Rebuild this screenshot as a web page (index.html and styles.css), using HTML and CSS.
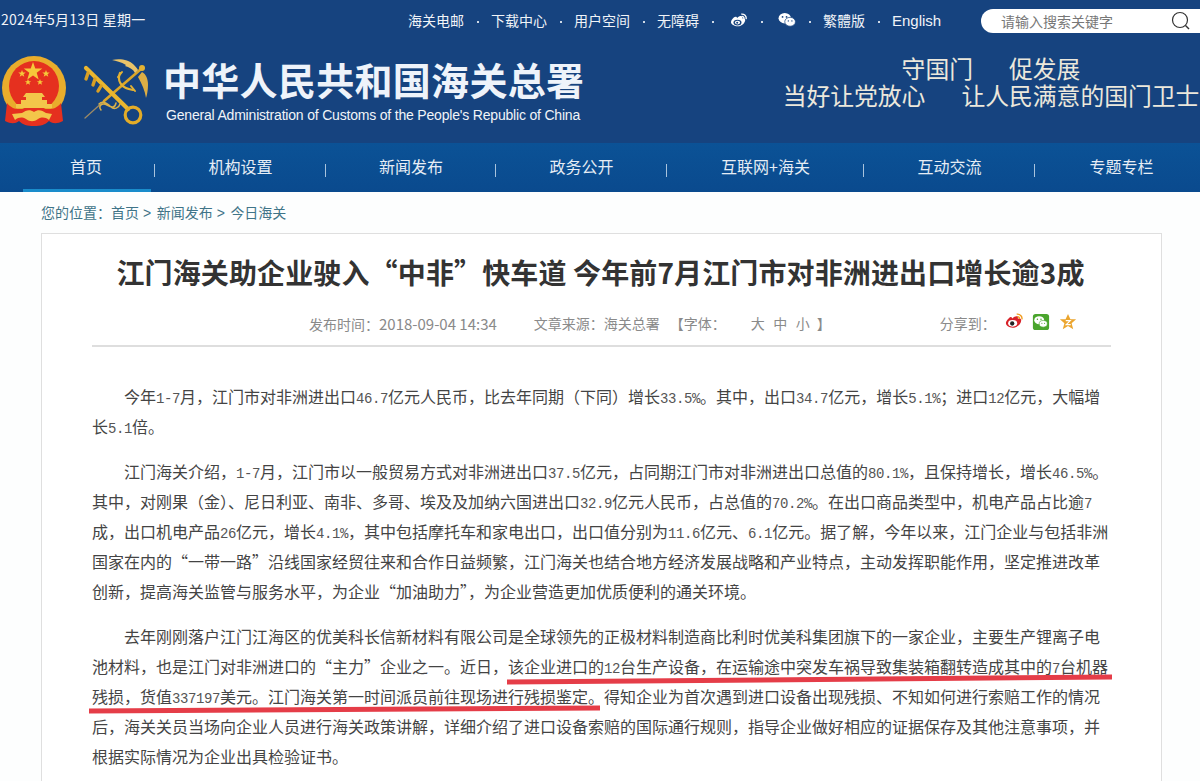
FILE: index.html
```html
<!DOCTYPE html>
<html lang="zh-CN">
<head>
    <meta charset="UTF-8">
    <title>江门海关助企业驶入“中非”快车道</title>
    <link rel="stylesheet" href="styles.css">
</head>
<body>

    <!-- 页头 -->
    <div class="header">
        <div class="top-bar">
            <div class="date">2024年5月13日 星期一</div>
            <div class="top-links">
                <a>海关电邮</a><i class="dot"></i>
                <a>下载中心</a><i class="dot"></i>
                <a>用户空间</a><i class="dot"></i>
                <a>无障碍</a><i class="dot"></i>
                <svg class="top-icon" viewBox="0 0 20 18">
                    <path fill="#fff" d="M8 5.500c2-2 4.300-2.600 5.300-1.600.5.500.5 1.400.2 2.300 2-.6 3.500-.1 3.500 1.700 0 3-3.700 7.100-8.500 7.100C4.900 15 1 13.100 1 10.500c0-1.400 1-3.500 2.800-5.100C5.400 4 7 3.300 8 5.500z"/>
                    <ellipse cx="8.300" cy="10.800" rx="4.500" ry="3.200" fill="#16437f"/>
                    <ellipse cx="8.300" cy="10.800" rx="3" ry="2" fill="#fff"/>
                    <circle cx="8" cy="11" r="1.200" fill="#16437f"/>
                    <path fill="none" stroke="#fff" stroke-width="1.500" d="M12.500 1.300c3.300-.5 6.200 2.200 5.600 5.600M13 4c1.600-.2 2.800 1 2.600 2.500"/>
                </svg><i class="dot"></i>
                <svg class="top-icon icon-wechat" viewBox="0 0 20 18">
                    <ellipse cx="7.500" cy="7" rx="7" ry="5.800" fill="#fff"/>
                    <ellipse cx="13.500" cy="11" rx="6" ry="5" fill="#fff" stroke="#16437f" stroke-width=".8"/>
                    <circle cx="5" cy="5.500" r="1" fill="#16437f"/>
                    <circle cx="9.500" cy="5.500" r="1" fill="#16437f"/>
                    <circle cx="11.500" cy="10" r=".8" fill="#16437f"/>
                    <circle cx="15.500" cy="10" r=".8" fill="#16437f"/>
                </svg><i class="dot"></i>
                <a>繁體版</a><i class="dot"></i>
                <a class="english">English</a>
            </div>
            <div class="search">
                <span class="search-text">请输入搜索关键字</span>
                <svg class="search-icon" viewBox="0 0 20 20">
                    <circle cx="9" cy="9" r="7.500" fill="none" stroke="#333" stroke-width="1.200"/>
                    <path d="M14.500 14.500l3.500 3.500" stroke="#333" stroke-width="1.400"/>
                </svg>
            </div>
        </div>
        <div class="brand">
            <svg class="emblem" viewBox="0 0 66 70">
                <circle cx="32" cy="32" r="32" fill="#e9ad2c"/>
                <circle cx="32" cy="30" r="25" fill="#e5301f"/>
                <path fill="#f6c93a" d="M31 6l2.300 6.600h7l-5.600 4.200 2 6.700-5.700-4-5.700 4 2-6.700-5.600-4.200h7z"/>
                <path fill="#f6c93a" d="M20 14l1 2.600h2.700l-2.200 1.600.8 2.600-2.300-1.600-2.300 1.600.8-2.600-2.200-1.600H19zM44 14l1 2.600h2.700l-2.200 1.600.8 2.600-2.300-1.600-2.300 1.600.8-2.600-2.200-1.600H43zM26 23l.9 2.200h2.300l-1.900 1.400.7 2.200-2-1.300-2 1.300.7-2.200-1.900-1.400h2.300zM38 23l.9 2.200h2.300l-1.900 1.400.7 2.200-2-1.300-2 1.300.7-2.200-1.900-1.400h2.300z"/>
                <path fill="#f3c64a" d="M24 37h16l3 4h-3v3h5v4H19v-4h5v-3h-3zM14 48h36v4H14z"/>
                <path fill="#e5301f" d="M5 47c4 5 8 6 12 6h30c4 0 8-1 12-6l2 18c-6 3-10 3-14 0-4 4-8 5-15 5s-11-1-15-5c-4 3-8 3-14 0z"/>
                <path fill="#f3c64a" d="M20 57c4-3 8-4 12-1 4-3 8-2 12 1l6 1-3 6c-4-3-7-3-11-1-4 3-8 3-12 0-4-2-7-2-11 1l-3-6z"/>
            </svg>
            <svg class="customs-mark" viewBox="0 0 70 70">
                <g fill="none" stroke-linecap="round">
                    <path d="M3 60L22 43" stroke="#9c8a66" stroke-width="1.300"/>
                    <path d="M22 43L59 11" stroke="#dba629" stroke-width="2.600"/>
                    <path d="M38 15c-3 7 0 15 13 17" stroke="#e3b233" stroke-width="2.200"/>
                    <path d="M36 19l4-5M49 28l4 5" stroke="#e3b233" stroke-width="2"/>
                    <path d="M19 52c-3-4 1-8 6-5s8 3 9-2M17 46c4-4 9 0 12 3s8 1 9-3" stroke="#d8b04a" stroke-width="1.500"/>
                    <path d="M4 10L46 51" stroke="#eab62f" stroke-width="4.200"/>
                    <circle cx="51" cy="57" r="7.800" stroke="#e3ac28" stroke-width="3.200"/>
                    <path d="M6 15l-2 6M13 21l-2 6M19 28l-3 5" stroke="#d9a025" stroke-width="3.400"/>
                </g>
                <circle cx="60" cy="10" r="3" fill="#e3b233"/>
                <path fill="#eac469" d="M30 2c8-2 17 0 21 4 2 2 4 4 5 6l-3 3c-2-4-6-6-10-7l1-1c-5-3-10-4-14-5z"/>
                <path fill="#dcae45" d="M60 14c4 2 6 7 6 13 0 5-1 10-2 13-1-7-4-14-8-21z"/>
            </svg>
            <div class="site-name">
                <div class="site-cn">中华人民共和国海关总署</div>
                <div class="site-en">General Administration of Customs of the People's Republic of China</div>
            </div>
            <div class="slogan">
                <div><span class="slogan-a">守国门</span><span>促发展</span></div>
                <div><span class="slogan-a">当好让党放心</span><span>让人民满意的国门卫士</span></div>
            </div>
        </div>
        <div class="nav">
            <a class="nav-item active">首页</a>
            <a class="nav-item">机构设置</a>
            <a class="nav-item">新闻发布</a>
            <a class="nav-item">政务公开</a>
            <a class="nav-item">互联网+海关</a>
            <a class="nav-item">互动交流</a>
            <a class="nav-item">专题专栏</a>
        </div>
    </div>

    <div class="crumbs">您的位置：<a>首页</a><span class="crumb-sep">&gt;</span><a>新闻发布</a><span class="crumb-sep">&gt;</span><a>今日海关</a></div>

    <!-- 正文 -->
    <div class="card">
        <h1 class="title">江门海关助企业驶入“中非”快车道 今年前7月江门市对非洲进出口增长逾3成</h1>
        <div class="meta">
            <span>发布时间：<span class="meta-date">2018-09-04 14:34</span></span>
            <span class="meta-source">文章来源：海关总署</span>
            <span class="meta-font">【字体：<a>大</a><a>中</a><a>小</a><b>】</b></span>
            <span class="meta-share">分享到：</span>
            <svg class="share-icon" viewBox="0 0 20 20">
                <path fill="#d8232a" d="M8 6c2.500-2.500 5-3 6-2 .6.600.5 1.500.2 2.500 2.500-.8 3.800 0 3.800 1.800 0 3.500-4 8-9.500 8C4.200 16.300 1 14 1 11.200c0-1.500 1-3.400 3-5.200C6 4.200 7.300 4 8 6z"/>
                <ellipse cx="8.500" cy="11.500" rx="5" ry="3.700" fill="#fff"/>
                <circle cx="8" cy="11.700" r="2.400" fill="#222"/>
                <path fill="none" stroke="#f09a1a" stroke-width="1.500" d="M13 1.300c3.500-.5 6.500 2.300 5.800 5.800M13.500 4c1.700-.2 2.900 1 2.700 2.700"/>
            </svg>
            <svg class="share-icon" viewBox="0 0 20 20">
                <rect x="1" y="1" width="18" height="18" rx="3" fill="#4aa52c"/>
                <ellipse cx="8" cy="8" rx="5.500" ry="4.500" fill="#fff"/>
                <ellipse cx="12.500" cy="12" rx="4.500" ry="3.700" fill="#fff" stroke="#4aa52c" stroke-width=".7"/>
                <circle cx="6" cy="7" r=".8" fill="#4aa52c"/>
                <circle cx="10" cy="7" r=".8" fill="#4aa52c"/>
                <circle cx="11" cy="11.500" r=".6" fill="#4aa52c"/>
                <circle cx="14" cy="11.500" r=".6" fill="#4aa52c"/>
            </svg>
            <svg class="share-icon" viewBox="0 0 20 20">
                <path fill="#eba52e" d="M10 1l2.700 6H19l-5 4.300 1.800 6.700L10 14.500 4.200 18 6 11.300 1 7h6.300z"/>
                <path fill="none" stroke="#fff" stroke-width="1.300" d="M7.500 8.500h5l-4.500 4.500h5"/>
            </svg>
        </div>

        <div class="article">
            <p>今年<span class="num">1-7</span>月，江门市对非洲进出口<span class="num">46.7</span>亿元人民币，比去年同期（下同）增长<span class="num">33.5%</span>。其中，出口<span class="num">34.7</span>亿元，增长<span class="num">5.1%</span>；进口<span class="num">12</span>亿元，大幅增长<span class="num">5.1</span>倍。</p>
            <p>江门海关介绍，<span class="num">1-7</span>月，江门市以一般贸易方式对非洲进出口<span class="num">37.5</span>亿元，占同期江门市对非洲进出口总值的<span class="num">80.1%</span>，且保持增长，增长<span class="num">46.5%</span>。其中，对刚果（金）、尼日利亚、南非、多哥、埃及及加纳六国进出口<span class="num">32.9</span>亿元人民币，占总值的<span class="num">70.2%</span>。在出口商品类型中，机电产品占比逾<span class="num">7</span>成，出口机电产品<span class="num">26</span>亿元，增长<span class="num">4.1%</span>，其中包括摩托车和家电出口，出口值分别为<span class="num">11.6</span>亿元、<span class="num">6.1</span>亿元。据了解，今年以来，江门企业与包括非洲国家在内的“一带一路”沿线国家经贸往来和合作日益频繁，江门海关也结合地方经济发展战略和产业特点，主动发挥职能作用，坚定推进改革创新，提高海关监管与服务水平，为企业“加油助力”，为企业营造更加优质便利的通关环境。</p>
            <p>去年刚刚落户江门江海区的优美科长信新材料有限公司是全球领先的正极材料制造商比利时优美科集团旗下的一家企业，主要生产锂离子电池材料，也是江门对非洲进口的“主力”企业之一。近日，该企业进口的<span class="num">12</span>台生产设备，在运输途中突发车祸导致集装箱翻转造成其中的<span class="num">7</span>台机器残损，货值<span class="num">337197</span>美元。江门海关第一时间派员前往现场进行残损鉴定。得知企业为首次遇到进口设备出现残损、不知如何进行索赔工作的情况后，海关关员当场向企业人员进行海关政策讲解，详细介绍了进口设备索赔的国际通行规则，指导企业做好相应的证据保存及其他注意事项，并根据实际情况为企业出具检验证书。</p>
            <!-- 红色划线 -->
            <svg class="marks" viewBox="0 0 1200 781">
                <path d="M507 682L1112 677" stroke="#e53d48" stroke-width="5"/>
                <path d="M89 711L600 708" stroke="#e53d48" stroke-width="5"/>
            </svg>
        </div>
    </div>

</body>
</html>
```

FILE: styles.css
```css
html, body {
    height: 100%;
    overflow: hidden;
}
body {
    margin: 0;
    background-color: #fdfefe;
    font-family: "Noto Sans CJK SC", sans-serif;
    color: #444;
}
.header {
    color: #f1f4f8;
    background-color: #16437f;
}
.top-bar {
    display: flex;
    align-items: center;
    height: 40px;
    font-size: 14px;
}
.date {
    width: 408px;
    padding-left: 1px;
    box-sizing: border-box;
    margin-top: -2px;
    letter-spacing: 0.2px;
}
.top-links {
    display: flex;
    align-items: center;
    width: 573px;
}
.dot {
    width: 2px;
    height: 2px;
    margin: 4px 12px 0 13px;
    background-color: #cfd9e6;
}
.top-icon {
    width: 18px;
    height: 16px;
    margin: 2px 0 0 4px;
}
.icon-wechat {
    margin-left: 3px;
    margin-top: 0;
}
.english {
    font-family: "Liberation Sans", sans-serif;
    font-size: 15px;
}
.search {
    display: flex;
    align-items: center;
    justify-content: space-between;
    flex: 1;
    height: 24px;
    margin-top: 1px;
    padding: 0 9px 0 20px;
    border-radius: 12px 0 0 12px;
    background-color: #fff;
}
.search-text {
    color: #777;
    font-size: 14px;
}
.search-icon {
    width: 20px;
    height: 20px;
}
.brand {
    display: flex;
    height: 103px;
}
.emblem {
    width: 66px;
    height: 70px;
    margin: 16px 0 0 2px;
}
.customs-mark {
    width: 70px;
    height: 70px;
    margin: 18px 0 0 14px;
}
.site-name {
    width: 418px;
    margin-left: 11px;
}
.site-cn {
    margin-top: 14px;
    font-size: 38px;
    font-weight: 700;
    line-height: 50px;
    letter-spacing: 0.3px;
    white-space: nowrap;
    color: #eef3fa;
}
.site-en {
    margin-top: 3px;
    margin-left: 3px;
    font-family: "Liberation Sans", sans-serif;
    font-size: 14px;
    line-height: 16px;
    letter-spacing: -0.19px;
    white-space: nowrap;
}
.slogan {
    margin: 14px 0 0 auto;
    width: 418px;
    text-align: center;
    color: #ece8dc;
    font-size: 23.8px;
    line-height: 27px;
    white-space: nowrap;
}
.slogan-a {
    margin-right: 36px;
}
.nav {
    display: grid;
    grid-template-columns: 132px 171px 170px 171px 197px 171px 1fr;
    height: 49px;
    padding-left: 23px;
    background: linear-gradient(#0b5296, #0a4a8e);
}
.nav-item {
    position: relative;
    display: flex;
    align-items: center;
    justify-content: center;
    padding-bottom: 3px;
    font-size: 16px;
    color: #e6edf5;
}
.nav-item::after {
    content: "";
    position: absolute;
    right: 0;
    top: 21px;
    width: 1px;
    height: 13px;
    background-color: #a8c3dd;
}
.nav-item:last-child {
    padding-left: 8px;
}
.nav-item:last-child::after {
    display: none;
}
.nav-item.active {
    padding-right: 6px;
}
.nav-item.active::before {
    content: "";
    position: absolute;
    left: 0;
    right: 4px;
    bottom: 0;
    height: 3px;
    background-color: #1a8ccb;
}
.crumbs {
    height: 41px;
    padding-left: 41px;
    font-size: 14px;
    line-height: 41px;
    color: #3f7488;
}
.crumb-sep {
    margin: 0 5.5px 0 4px;
    font-family: "Liberation Sans", sans-serif;
}
.card {
    box-sizing: border-box;
    height: 548px;
    margin: 0 38px 0 41px;
    padding: 0 50px;
    border: 1px solid #dfdfdf;
    border-bottom: 0;
    background-color: #fff;
}
.title {
    margin: 18px -30px 0 -32px;
    font-size: 28px;
    font-weight: 700;
    line-height: 40px;
    letter-spacing: 0.13px;
    text-align: center;
    color: #333;
    white-space: nowrap;
}
.meta {
    display: flex;
    align-items: center;
    height: 44px;
    margin-top: 9px;
    padding-left: 217px;
    border-bottom: 2px solid #dedede;
    font-size: 14px;
    color: #8a8a8a;
}
.meta-date {
    font-size: 15px;
}
.meta-source {
    margin-left: 37px;
}
.meta-font {
    margin-left: 10px;
}
.meta-font a {
    margin-left: 8.5px;
}
.meta-font a:first-of-type {
    margin-left: 25px;
}
.meta-font b {
    font-weight: 400;
    margin-left: 7px;
}
.meta-share {
    margin: 0 9px 0 109px;
}
.share-icon {
    width: 18px;
    height: 18px;
    margin: -3px 9px 0 0;
}
.article {
    position: relative;
    padding-top: 34px;
    font-size: 16px;
    line-height: 30px;
    color: #444;
}
.article p {
    margin: 0 0 15px;
    text-indent: 32px;
}
.num {
    font-family: "Liberation Mono", monospace;
    font-size: 14px;
    letter-spacing: -0.4px;
    line-height: 1;
    color: #555;
}
.marks {
    position: absolute;
    left: -92px;
    top: -347px;
    width: 1200px;
    height: 781px;
}
```
